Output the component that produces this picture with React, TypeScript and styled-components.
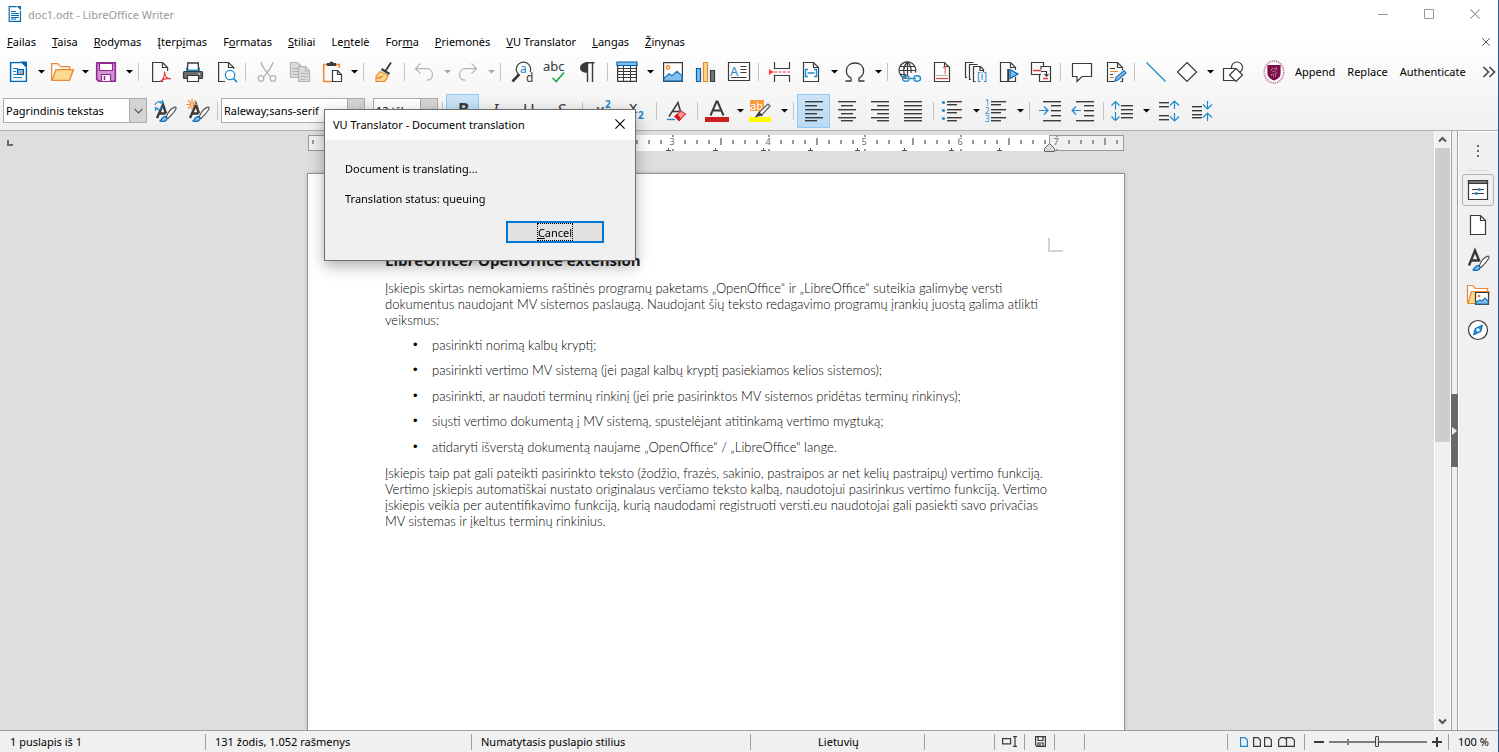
import React from 'react';
import styled, { createGlobalStyle, css } from 'styled-components';

const ink = '#3a3a38';
const blue = '#1e8bcd';
const red = '#ed3d3b';
const orange = '#ed8733';
const grey = '#b4b4b4';

const GlobalStyle = createGlobalStyle`
  * { box-sizing: border-box; }
  body { margin: 0; background: #dededc; }
  body, button, select, input {
    font-family: "Noto Sans", "Open Sans", sans-serif;
    font-size: 11px;
    color: #000;
  }
  button { border: 0; padding: 0; background: none; }
  svg { display: block; flex: none; overflow: visible; }
`;

const Window = styled.div`
  display: flex;
  flex-direction: column;
  height: 100vh;
  overflow: hidden;
  border-right: 1px solid #2b5797;
`;

const Chrome = styled.header`
  display: flex;
  flex-direction: column;
  background: linear-gradient(#fff 30%, #f0f0f0);
  border-bottom: 1px solid #b0b0b0;
`;

const TitleBar = styled.div`
  display: flex;
  align-items: center;
  height: 30px;
  padding: 0 0 2px 8px;
  gap: 6px;
  color: #999;
`;

const TitleText = styled.h1`
  flex: 1;
  margin: 0;
  font-size: 11px;
  font-weight: 400;
`;

const CaptionButtons = styled.div`
  display: flex;
`;

const CaptionButton = styled.button`
  display: flex;
  align-items: center;
  justify-content: center;
  width: 46px;
  height: 28px;
`;

const MenuBar = styled.nav`
  display: flex;
  align-items: center;
  height: 24px;
`;

const MenuItem = styled.button`
  padding: 0 8px;
  line-height: 20px;
  white-space: nowrap;
  &:first-child { padding-left: 7px; }
`;

const Spacer = styled.div`
  flex: 1;
`;

const Toolbar = styled.div<{ $tall?: boolean }>`
  display: flex;
  align-items: center;
  height: ${p => (p.$tall ? 39 : 37)}px;
  padding: ${p => (p.$tall ? '0 0 0 3px' : '0 0 2px 2px')};
`;

const ToolButton = styled.button<{ $active?: boolean; $split?: boolean }>`
  display: flex;
  align-items: center;
  flex: none;
  width: ${p => (p.$split ? 44 : 33)}px;
  height: 34px;
  padding-left: ${p => (p.$split ? 4 : 6)}px;
  gap: 8px;
  ${p => p.$active && css`
    background: linear-gradient(#cce4f7, #bbdaf3);
    box-shadow: inset 0 0 0 1px #90c8f6;
  `}
`;

const TextButton = styled.button`
  padding: 0 6px;
  line-height: 24px;
`;

const OverflowButton = styled.button`
  padding: 0 2px;
`;

const Separator = styled.div`
  flex: none;
  width: 8px;
  height: 18px;
  background: linear-gradient(#c3c3c3, #c3c3c3) center / 1px 100% no-repeat;
`;

const Gap = styled.div`
  flex: none;
  width: 8px;
`;

const Combo = styled.div<{ $width: number; $gap?: number }>`
  display: flex;
  flex: none;
  width: ${p => p.$width}px;
  height: 25px;
  margin-right: ${p => p.$gap || 0}px;
  border: 1px solid #ababb2;
  background: #fff;
`;

const ComboSelect = styled.select`
  flex: 1;
  min-width: 0;
  padding: 0 2px;
  border: 0;
  appearance: none;
  background: none;
`;

const ComboArrow = styled.span`
  display: flex;
  align-items: center;
  justify-content: center;
  width: 18px;
  margin: -1px;
  border: 1px solid #ababab;
  background: #d4d4d4;
`;

const Workspace = styled.main`
  display: flex;
  flex: 1;
  min-height: 0;
`;

const Canvas = styled.section`
  display: flex;
  flex-direction: column;
  flex: 1;
  min-width: 0;
  padding-right: 2px;
  background: #dededc;
`;

const RulerRow = styled.div`
  display: grid;
  grid-template-columns: 1fr auto 1fr;
  height: 42px;
  padding-top: 4px;
`;

const TabStop = styled.span`
  width: 6px;
  height: 6px;
  margin: 5px 0 0 7px;
  border-left: 2px solid #6b6b6b;
  border-bottom: 2px solid #6b6b6b;
`;

const Page = styled.article`
  flex: 1;
  align-self: center;
  width: 818px;
  padding: 64px 61px 0 77px;
  border: 1px solid #949494;
  border-bottom: 0;
  background: #fff;
  box-shadow: 0 0 4px rgba(0, 0, 0, 0.2);
  font-family: Lato, "Open Sans", sans-serif;
  font-size: 13px;
  font-weight: 300;
  line-height: 16px;
  color: #000;
`;

const MarginCorner = styled.div`
  width: 15px;
  height: 14px;
  margin-left: auto;
  border-left: 2px solid #d4d4d4;
  border-bottom: 2px solid #d4d4d4;
`;

const DocHeading = styled.h2`
  margin: -4px 0 8px;
  font-family: "Open Sans", sans-serif;
  font-size: 15px;
  line-height: 24px;
  font-weight: 700;
  color: #1c1c1c;
  white-space: nowrap;
`;

const Paragraph = styled.p`
  margin: 0 0 9px;
  white-space: nowrap;
`;

const BulletList = styled.ul`
  margin: 0;
  padding: 0 0 0 28px;
  list-style: none;
`;

const Bullet = styled.li`
  display: flex;
  margin-bottom: 9px;
  white-space: nowrap;
  &:nth-child(even), &:last-child { margin-bottom: 10px; }
  &::before {
    content: "•";
    width: 19px;
    font-family: "Liberation Sans", sans-serif;
    font-weight: 400;
  }
`;

const ScrollBar = styled.div`
  display: flex;
  flex-direction: column;
  width: 17px;
  background: #f0f0f0;
  border-left: 1px solid #fff;
  border-right: 1px solid #fff;
`;

const ScrollArrow = styled.button`
  display: flex;
  align-items: center;
  justify-content: center;
  height: 17px;
`;

const ScrollTrack = styled.div`
  flex: 1;
`;

const ScrollThumb = styled.div`
  height: 52%;
  background: #cdcdcd;
`;

const Splitter = styled.div`
  display: flex;
  align-items: center;
  width: 7px;
  background: #f0f0f0;
  border-left: 1px solid #a0a0a0;
  border-right: 1px solid #a0a0a0;
`;

const SplitHandle = styled.button`
  display: flex;
  align-items: center;
  justify-content: center;
  flex: none;
  width: 7px;
  height: 73px;
  margin: 0 -1px;
  background: #696969;
`;

const Sidebar = styled.aside`
  display: flex;
  flex-direction: column;
  align-items: center;
  width: 40px;
  padding-right: 2px;
  background: #f0f0f0;
  border-left: 1px solid #fff;
  border-top: 1px solid #fff;
`;

const SideMenu = styled.button`
  display: flex;
  align-items: center;
  justify-content: center;
  width: 22px;
  height: 39px;
  margin-bottom: 3px;
  border-bottom: 1px solid #dcdcdc;
`;

const SideButton = styled.button<{ $active?: boolean }>`
  display: flex;
  align-items: center;
  justify-content: center;
  width: 32px;
  height: 32px;
  margin-bottom: 3px;
  border: 1px solid ${p => (p.$active ? '#b4b4b4' : 'transparent')};
  border-radius: 3px;
`;

const StatusBar = styled.footer`
  display: flex;
  align-items: center;
  height: 22px;
  background: #f0f0f0;
  border-top: 1px solid #a0a0a0;
`;

const StatusCell = styled.div<{ $width?: number; $center?: boolean }>`
  display: flex;
  align-items: center;
  justify-content: ${p => (p.$center ? 'center' : 'flex-start')};
  flex: ${p => (p.$width ? 'none' : '1')};
  width: ${p => (p.$width ? `${p.$width}px` : 'auto')};
  height: 16px;
  padding-left: ${p => (p.$center ? 2 : 9)}px;
  gap: 5px;
  border-right: 1px solid #a0a0a0;
  white-space: nowrap;
  &:first-child { padding-left: 10px; }
  &:last-child { border-right: 0; }
`;

const ZoomSlider = styled.input`
  appearance: none;
  width: 98px;
  height: 14px;
  margin: 0;
  background:
    linear-gradient(#7d7d7d, #7d7d7d) 0 6px / 100% 2px no-repeat,
    linear-gradient(#7d7d7d, #7d7d7d) 18px 4px / 2px 6px no-repeat;
  &::-webkit-slider-thumb {
    appearance: none;
    width: 4px;
    height: 11px;
    border: 1px solid #444;
    border-radius: 1px;
    background: #e0e0e0;
  }
`;

const Dialog = styled.section`
  position: fixed;
  left: 324px;
  top: 109px;
  width: 312px;
  height: 152px;
  border: 1px solid #6f6f6f;
  background: #f0f0f0;
  box-shadow: 0 5px 14px rgba(0, 0, 0, 0.32);
`;

const DialogTitle = styled.header`
  display: flex;
  align-items: center;
  justify-content: space-between;
  height: 30px;
  padding: 0 10px 2px 8px;
  background: #fff;
`;

const DialogBody = styled.div`
  display: flex;
  flex-direction: column;
  gap: 14px;
  padding: 21px 31px 0 20px;
`;

const DialogText = styled.p`
  margin: 0;
  line-height: 16px;
`;

const CancelButton = styled.button`
  align-self: flex-end;
  display: flex;
  justify-content: center;
  width: 98px;
  height: 22px;
  border: 2px solid #0078d7;
  background: #e1e1e1;
`;

const FocusLabel = styled.span`
  height: 18px;
  line-height: 20px;
  outline: 1px dotted #000;
  outline-offset: -1px;
  padding: 0 1px;
`;

/* Shared icon canvas */
const Icon = ({ children, size = 24 }: { children: React.ReactNode; size?: number }) => (
  <svg width={size} height={size} viewBox={`0 0 ${size} ${size}`} fill="none" stroke={ink} strokeWidth="1.2" aria-hidden="true">
    {children}
  </svg>
);

const Arrow = ({ dim }: { dim?: boolean }) => (
  <svg width="7" height="5" viewBox="0 0 7 5" aria-hidden="true"><path d="M0 1h7L3.5 4.6z" fill={dim ? '#a8a8a8' : '#000'} /></svg>
);

const Chevron = ({ up }: { up?: boolean }) => (
  <svg width="9" height="7" viewBox="0 0 9 7" fill="none" stroke="#555" strokeWidth="2" aria-hidden="true">
    <path d={up ? 'M1 5.5 4.5 2 8 5.5' : 'M1 1.5 4.5 5 8 1.5'} />
  </svg>
);

const Rows = ({ list, color = ink }: { list: [number, number, number][]; color?: string }) => (
  <g stroke="none" fill={color}>
    {list.map(([x, y, w]) => <rect key={`${x}-${y}`} x={x} y={y} width={w} height="1.4" />)}
  </g>
);

const Cross = ({ size, color }: { size: number; color: string }) => (
  <svg width={size} height={size} viewBox="0 0 10 10" fill="none" stroke={color} strokeWidth="1.1" aria-hidden="true">
    <path d="M.4.4l9.2 9.2M9.6.4.4 9.6" />
  </svg>
);

const brushTail = (
  <>
    <path d="M13 18.5C15 13 19 9 22 8.2c1.400 0 1.200 1.300.6 2.300-1.600 3-4.600 6-7.600 9z" fill="#fff" stroke="#555" />
    <path d="M6.500 21.800c2.500.3 1.300-3 4.600-4 2.300-.6 3.800 1.200 2.500 3-1.300 1.800-5 2.100-7.100 1z" fill="#83beec" stroke="#0063b1" />
  </>
);

const styleA = <path d="M4 19 10 5.500l3 9M6.500 14.500h6" strokeWidth="2.400" />;

const icons: Record<string, React.ReactNode> = {
  newDoc: <><path d="M15 2.600H4.600v18.800h15.800V8" fill="#fff" stroke="#0063b1" strokeWidth="1.400" /><path d="M14 1.500h7v7z" fill="#0063b1" stroke="none" /><path d="M7 8.500h5M7 11.500h3M7 14.500h4M7 17.500h9" stroke={blue} /><rect x="11.500" y="9.500" width="6" height="5" fill="#83beec" stroke="#0063b1" /><path d="M14 14l3-3v3z" fill={orange} stroke="none" /></>,
  open: <><path d="M1.600 20V3.600h6l3 3h9v3" fill="none" stroke={orange} /><path d="M2 20.400 6 9.600h17.400L19.500 20.400z" fill="#f8db8f" stroke={orange} strokeWidth="1.400" /></>,
  save: <><path d="M2.700 2.700h18.600v18.600H4.700l-2-2z" fill="#d093d6" stroke="#92278f" strokeWidth="1.600" /><path d="M5.500 3.500h13v7h-13z" fill="#fff" stroke="#92278f" /><path d="M7.500 21v-6.500h9V21" fill="#fff" stroke="#92278f" /><path d="M10.500 16v4" stroke="#92278f" strokeWidth="1.600" /></>,
  pdf: <><path d="M15 21.500H4.600v-19h10l5 5V11M14.500 2.500v5h5" /><path d="M12 21.500c3-1 5-5.500 4.500-10 .2 5 3 7.500 6.500 7.500-3-1.300-8 0-11 2.500z" stroke={red} /></>,
  print: <><path d="M6.600 9V3h10.800v6" fill="#fff" /><path d="M5 7.500h14V12H5z" fill={blue} stroke="none" /><path d="M6.500 6.500h11v3h-11z" fill="#fff" stroke="none" /><path d="M6.600 10V3h10.800v7" /><rect x="2.500" y="11.500" width="19" height="7" rx="1" fill="#6d6d6d" /><path d="M17 14h2" stroke="#fff" /><path d="M6.500 15.500h11v6h-11z" fill="#fff" /></>,
  preview: <><path d="M11 21.500H4.600v-19h10l5 5V9M14.500 2.500v5h5" /><circle cx="16" cy="15" r="4.700" fill="#fff" stroke={blue} /><path d="m19.300 18.400 3.700 3.700" stroke={blue} strokeWidth="1.500" /></>,
  cut: <g stroke={grey} strokeWidth="1.300"><path d="M6 2c1 5 4 8 9 14.500M18 2c-1 5-4 8-9 14.500" /><circle cx="6" cy="18.500" r="2.800" /><circle cx="18" cy="18.500" r="2.800" /></g>,
  copy: <g stroke={grey} fill="#dadada"><path d="M2.500 2.500h7l4 4v11h-11z" /><path d="M4.500 8.500h6M4.500 11.500h6M4.500 14.500h6" /><path d="M10.500 6.500h7l4 4v11h-11z" /><path d="M12.500 13.500h7M12.500 16.500h7M12.500 19.500h5M17.500 7v4h4" /></g>,
  paste: <><path d="M13 21.400H4.700V4.500h4M16 4.500h4.300V8" stroke={orange} strokeWidth="1.500" /><path d="M8.500 5.500v-2h2.500c0-2 3-2 3 0h2.500v2z" fill={ink} /><path d="M13.500 10.500h5l4 4v7h-9z" fill="#fff" /><path d="M18.500 10.500v4h4" /></>,
  clone: <><path d="m12.500 11 5.500-8.500" strokeWidth="1.800" /><path d="m8.500 9 8 5" strokeWidth="2.200" /><path d="M7 11.500c-1 2-2.500 3.500-4 4.500v5.500h8.500c1.500-1.500 3-4 3.500-6z" fill="#f8db8f" stroke={orange} /><path d="M3.500 18h5m-5 0 7-2" stroke={orange} /></>,
  undo: <path d="M8.500 3.500 3.500 8.700l5 5M3.500 8.700h11c3.500 0 6 2.500 6 6s-2.500 5.500-6 5.500" stroke={grey} />,
  redo: <path d="m15.500 3.500 5 5.200-5 5M20.500 8.700h-11c-3.500 0-6 2.500-6 6s2.500 5.500 6 5.500" stroke={grey} />,
  find: <><path d="M10 15.600A7.200 7.200 0 1 1 20.200 12" stroke={ink} /><path d="m9 14.500-6.500 7" strokeWidth="2.600" /><text x="10" y="13" fontSize="12" fill={blue} stroke="none">a</text><text x="16" y="22" fontSize="12" fill={ink} stroke="none">d</text></>,
  spell: <><text x="0" y="11" fontSize="13" fill={ink} stroke="none">abc</text><path d="m9.500 18 3.700 3.500L21 12.500" stroke="#18ab50" strokeWidth="1.700" /></>,
  pilcrow: <><path d="M11 2.500c-4 0-7 2-7 5.300 0 3.200 3 5 7 5z" fill={ink} stroke="none" /><path d="M11.500 2v20M16.500 2v20M9 2.700h9.500" strokeWidth="1.400" /></>,
  table: <><path d="M2.600 2.600h18.800v18.800H2.600z" fill="#fff" /><path d="M2 2h20v3.500H2z" fill="#83beec" stroke="#0063b1" /><path d="M2.500 8.500h19M2.500 11.500h19M2.500 14.500h19M2.500 17.500h19M8.500 6v15M15.500 6v15" strokeWidth="1" /></>,
  image: <><path d="M2.600 2.600h18.800v18.800H2.600z" fill="#fff" /><circle cx="7" cy="7.500" r="1.800" fill="#f8db8f" stroke={orange} /><path d="M3 20.800v-2.500l5-4.500 3 2 5-4.500 5 4.500v5z" fill="#83beec" stroke="#1e74bd" /></>,
  chart: <><path d="M2.500 8.500h4v13h-4z" fill="#83beec" stroke="#0063b1" /><path d="M9.500 2.500h4v19h-4z" fill="#f8db8f" stroke={orange} /><path d="M16.500 10.500h4v11h-4z" fill="#797774" /></>,
  textBox: <><path d="M1.500 2.500h21v18h-21z" fill="#fff" /><text x="3" y="16" fontSize="13" fill={blue} stroke="none">A</text><path d="M13.500 6.500h6M13.500 9.500h6M13.500 12.500h6M4 17.500h15.500" strokeWidth="1" /></>,
  pageBreak: <><path d="M6.500 2v6.500h15V2M6.500 22v-6.500h15V22" /><path d="M1 9v6l4.500-3z" fill={red} stroke="none" /><path d="M6 12h16" stroke={red} strokeDasharray="3 1.500" /></>,
  field: <><path d="M4.500 21.500v-19h10l5 5v14zM14.500 2.500v5h5" fill="#fff" /><path d="M9 9.500H6.500v7H9M15 9.500h2.500v7H15M8.500 13h7" stroke={blue} strokeWidth="1.400" /></>,
  omega: <path d="M2.500 21h5.500v-3c-3-1.500-4.600-4-4.600-7C3.400 6 7 3 12 3s8.600 3 8.600 8c0 3-1.600 5.500-4.600 7v3h5.500" strokeWidth="1.300" />,
  link: <><path d="M18.500 12.500A8.400 8.400 0 1 0 9 18.500" /><path d="M10.500 2c-5 5-5 11.500-1 16.500M10.500 2c3 3 4 7 3.500 11M10.500 2v14M3 6.500h15M2 10.500h17M3 14.500h6" /><path d="M12 17.500c0-2.500-6.500-2.500-6.500 1s6.500 3.500 6.500 1M17 17.500c0-2.500 6.500-2.500 6.500 1s-6.500 3.500-6.500 1M10 18.500h9" stroke={blue} strokeWidth="1.400" /></>,
  footnote: <><path d="M4.500 21.500v-19h10l5 5v14zM14.500 2.500v4h5" fill="#fff" /><path d="M6 15.500h12" stroke={grey} /><path d="M6 18.500h12" stroke={red} /><text x="12" y="14" fontSize="10" fill={red} stroke="none">1</text></>,
  endnote: <><path d="M4 17.500H2.500v-15h8M8 19.500H6.500v-15h8" /><path d="M12.500 21.500h-2v-15h7l3 3V12M17 6.500v4h3.500" /><text x="14" y="20" fontSize="11" fill={blue} stroke="none">[i]</text></>,
  bookmark: <><path d="M15 21.500H4.500v-19h10l5 5V10M14.500 2.500v5h5M19.500 17v4.500h-6" /><path d="M12.200 9v13" strokeWidth="2" /><path d="M14 9.500v9l8-4.500z" fill="#83beec" stroke="#0063b1" /></>,
  crossRef: <><path d="M12 14.500H2.500v-12h12V6" /><path d="M4 10.500h8" stroke={red} strokeWidth="1.500" /><path d="M12 9.500v-3h9.500v15h-11V14" /><path d="M12 11.500h5.500V16M15.500 14.200l2 2 2-2" /><path d="M14 18.500h5" stroke={red} strokeWidth="1.500" /></>,
  comment: <path d="M2.500 3.500h19v13H12l-5 5v-5H2.500z" fill="#fff" />,
  track: <><path d="M12 21.500H4.500v-19h10l5 5V10M14.500 2.500v5h5M19.500 18v3.500h-2" /><path d="M7 8.500h5M7 14.500h3" stroke={ink} /><path d="M7 11.500h8M7 17.500h4" stroke={orange} /><path d="m12 21 1-3.500 8-7 2 2.500-8 7z" fill="#83beec" stroke="#1e74bd" /></>,
  line: <path d="m2.500 2.500 19 19" stroke={blue} />,
  diamond: <path d="M12 2.500 21.500 12 12 21.500 2.500 12z" fill="#fff" />,
  shapes: <><circle cx="16" cy="7.500" r="5.500" fill="#fff" /><path d="M2.500 8.500h12v12h-12z" fill="#fff" /><path d="m15 8.500 6.500 6.500-6.500 6.500L8.500 15z" fill="#fff" /></>,
  crest: <><ellipse cx="12" cy="12" rx="9.700" ry="11" fill="#fff" stroke="#c88aa9" strokeWidth="1.800" strokeDasharray="1.500 .8" /><path d="M6 5.500h12v8c0 4-3 5-6 6.500-3-1.500-6-2.500-6-6.500z" fill="#7b0e46" stroke="#7b0e46" /><path d="m9 10 2-2 2 1 1.500-2v3l-2 2-2-1zM9.500 16v-2h2v3M13.500 17v-4h2" stroke="#c27fa0" strokeWidth=".8" /></>,
  styleUpdate: <>{styleA}{brushTail}<path d="M2 6c1-3.500 5.500-4.500 7.500-2V1M9.500 4h-3M10 7.500c-1 3.500-5.500 4-7.500 1.500v3M2.500 9h3" stroke={blue} /></>,
  styleNew: <>{styleA}{brushTail}<path d="M6 0v3M6 8v3M.5 5.500h3M8.500 5.500h3M2 1.500l2 2M10 1.500l-2 2M2 9.500l2-2M4.500 4h3v3h-3z" stroke={orange} /></>,
  bold: <text x="6" y="17" fontSize="17" fontWeight="700" fill={ink} stroke="none">B</text>,
  italic: <text x="8" y="17" fontSize="16" fontStyle="italic" fill={ink} stroke="none">I</text>,
  underline: <text x="5" y="17" fontSize="16" textDecoration="underline" fill={ink} stroke="none">U</text>,
  strike: <text x="7" y="17" fontSize="16" textDecoration="line-through" fill={ink} stroke="none">S</text>,
  superscript: <><text x="4" y="17" fontSize="16" fill={ink} stroke="none">x</text><text x="13" y="9" fontSize="10" fontWeight="700" fill={blue} stroke="none">2</text></>,
  subscript: <><text x="4" y="14" fontSize="16" fill={ink} stroke="none">x</text><text x="13" y="20" fontSize="10" fontWeight="700" fill={blue} stroke="none">2</text></>,
  clear: <><path d="m3 17.500 9-14 2.500 9M6.500 12.500h7" strokeWidth="1.500" /><path d="M1 20.500h8" stroke={blue} strokeWidth="1.400" /><path d="m9 17.500 6-5.500 4.500 3-6.500 6.500z" fill="#f7989c" stroke={red} /><path d="m9 17.500 4 4 1.500-1.500-3.500-4.500z" fill="#c9211e" stroke="#c9211e" /></>,
  fontColor: <><path d="m5.500 16.500 6-14h1l6 14M8 11.500h8" strokeWidth="2" /><path d="M0 18h24v5H0z" fill="#c9211e" stroke="none" /></>,
  highlight: <><path d="M1 1h14v11H1z" fill="#ff9a3c" stroke="none" /><text x="1" y="11" fontSize="11" fill="#fff" stroke="none">ab</text><path d="M0 18h22v5H0z" fill="#ffff00" stroke="none" /><path d="m10 13.500 9-8.500 2 2-8.500 9.500z" fill="#fff" stroke="#555" /><path d="m7 17.500 3-4 2.500 2.500z" fill={ink} stroke={ink} /></>,
  alignLeft: <Rows list={[[2, 2, 18], [2, 6, 12], [2, 10, 18], [2, 14, 12], [2, 18, 18], [2, 21, 12]]} />,
  alignCenter: <Rows list={[[2, 2, 18], [5, 6, 12], [2, 10, 18], [5, 14, 12], [2, 18, 18], [5, 21, 12]]} />,
  alignRight: <Rows list={[[2, 2, 18], [8, 6, 12], [2, 10, 18], [8, 14, 12], [2, 18, 18], [8, 21, 12]]} />,
  justify: <Rows list={[[2, 2, 18], [2, 6, 18], [2, 10, 18], [2, 14, 18], [2, 18, 18], [2, 21, 18]]} />,
  bullets: <><Rows list={[[6, 2, 15], [6, 5, 10], [6, 10, 15], [6, 13, 10], [6, 18, 15], [6, 21, 10]]} /><g fill={blue} stroke="none"><circle cx="2.500" cy="3.500" r="1.600" /><circle cx="2.500" cy="11.500" r="1.600" /><circle cx="2.500" cy="19.500" r="1.600" /></g></>,
  numbers: <><Rows list={[[6, 2, 15], [6, 5, 10], [6, 10, 15], [6, 13, 10], [6, 18, 15], [6, 21, 10]]} /><g fill={blue} stroke="none" fontSize="8"><text x="0" y="7">1</text><text x="0" y="15">2</text><text x="0" y="23">3</text></g></>,
  indent: <><Rows list={[[4, 2, 18], [12, 6, 10], [12, 11, 10], [12, 16, 10], [4, 21, 18]]} /><path d="M0 11.500h9M5 7.500l4 4-4 4" stroke={blue} /></>,
  outdent: <><Rows list={[[4, 2, 18], [12, 6, 10], [12, 11, 10], [12, 16, 10], [4, 21, 18]]} /><path d="M0 11.500h9M4 7.500l-4 4 4 4" stroke={blue} /></>,
  lineSpacing: <><Rows list={[[10, 6, 12], [10, 10, 12], [10, 14, 12], [10, 18, 12]]} /><path d="M4.500 2.500v8M.5 6.500l4-4 4 4M4.500 13v8M.5 17.500l4 4 4-4" stroke={blue} /></>,
  spaceUp: <><Rows list={[[2, 3, 10], [2, 7, 10], [2, 16, 10], [2, 20, 10]]} /><path d="M17.500 2v8M13 6.500 17.500 2 22 6.500M17.500 14v8M13 17.500l4.500 4.500 4.500-4.500" stroke={blue} /></>,
  spaceDown: <><Rows list={[[2, 7, 10], [2, 11, 10], [2, 15, 10], [2, 18, 10]]} /><path d="M17.500 2v8M13 5.500l4.500 4.500L22 5.500M17.500 14v8M13 18.500l4.500-4.500 4.500 4.500" stroke={blue} /></>,
  sideProps: <><path d="M2.500 2.500h19v19h-19z" fill="#fff" /><path d="M2.500 2.500h19v3h-19z" fill="#797774" /><path d="M6 11.500h12M6 15.500h12" /><circle cx="13.500" cy="11.500" r="1.600" fill={blue} stroke="none" /><circle cx="10.500" cy="15.500" r="1.600" fill={blue} stroke="none" /></>,
  sidePage: <path d="M4.500 2.500h10l5 5v14h-15zM14.500 2.500v5h5" fill="#fff" />,
  sideStyle: <><path d="m3 17.500 6-15 4.500 11M5 12.500h7.500" strokeWidth="2.400" />{brushTail}</>,
  sideGallery: <><path d="M1.500 20V2.500h5l3 3h12v3" fill="#fff" stroke={orange} /><path d="M2 20.500 5.500 8.500H23l-1 12z" fill="#f8db8f" stroke={orange} /><path d="M9.500 9.500h13v12h-13z" fill="#fff" /><circle cx="13" cy="13" r="1.500" fill={orange} stroke="none" /><path d="m10 21 0-2 4-2 2 1 3-3 3 3v3z" fill="#83beec" stroke="#1e74bd" /></>,
  sideNav: <><circle cx="12" cy="12" r="9.500" fill="#fff" /><path d="m16.500 7-1.500 6.500-7.500 3.500 1.500-6.500z" fill={blue} stroke="#0063b1" strokeWidth=".8" /><circle cx="12" cy="12" r="1.700" fill="#fff" stroke="none" /></>,
};

type Tool = [string, string, ('split' | 'dim' | 'active')?] | '|';

const standardTools: Tool[] = [
  ['newDoc', 'Naujas', 'split'], ['open', 'Atverti', 'split'], ['save', 'Įrašyti', 'split'], '|',
  ['pdf', 'Eksportuoti PDF'], ['print', 'Spausdinti'], ['preview', 'Spaudinio peržiūra'], '|',
  ['cut', 'Iškirpti'], ['copy', 'Kopijuoti'], ['paste', 'Įdėti', 'split'], '|',
  ['clone', 'Klonuoti formatavimą'], '|',
  ['undo', 'Atšaukti', 'dim'], ['redo', 'Pakartoti', 'dim'], '|',
  ['find', 'Rasti ir pakeisti'], ['spell', 'Rašyba'], ['pilcrow', 'Nespausdinamieji ženklai'], '|',
  ['table', 'Lentelė', 'split'], ['image', 'Paveikslas'], ['chart', 'Diagrama'], ['textBox', 'Teksto laukas'], '|',
  ['pageBreak', 'Puslapio lūžis'], ['field', 'Laukas', 'split'], ['omega', 'Specialusis ženklas', 'split'], '|',
  ['link', 'Saitas'], ['footnote', 'Puslapinė išnaša'], ['endnote', 'Galinė išnaša'], ['bookmark', 'Adresynas'], ['crossRef', 'Kryžminė nuoroda'], '|',
  ['comment', 'Komentaras'], ['track', 'Keitimai'], '|',
  ['line', 'Linija'], ['diamond', 'Figūros', 'split'], ['shapes', 'Piešimo funkcijos'],
];

const formatTools: Tool[] = [
  ['bold', 'Pusjuodis', 'active'], ['italic', 'Kursyvas'], ['underline', 'Pabrauktas'], ['strike', 'Perbrauktas'], '|',
  ['superscript', 'Viršutinis indeksas'], ['subscript', 'Apatinis indeksas'], '|',
  ['clear', 'Valyti formatavimą'], '|',
  ['fontColor', 'Šrifto spalva', 'split'], ['highlight', 'Paryškinimas', 'split'], '|',
  ['alignLeft', 'Lygiuoti kairėje', 'active'], ['alignCenter', 'Centruoti'], ['alignRight', 'Lygiuoti dešinėje'], ['justify', 'Abipusė lygiuotė'], '|',
  ['bullets', 'Ženklinimas', 'split'], ['numbers', 'Numeravimas', 'split'], '|',
  ['indent', 'Didinti įtrauką'], ['outdent', 'Mažinti įtrauką'], '|',
  ['lineSpacing', 'Tarpai tarp eilučių', 'split'], ['spaceUp', 'Didinti tarpus'], ['spaceDown', 'Mažinti tarpus'],
];

const Tools = ({ list }: { list: Tool[] }) => (
  <>
    {list.map((tool, i) => {
      if (tool === '|') return <Separator key={i} />;
      const [name, label, kind] = tool;
      const split = kind === 'split' || kind === 'dim';
      return (
        <ToolButton key={name} aria-label={label} $split={split} $active={kind === 'active'}>
          <Icon>{icons[name]}</Icon>
          {split && <Arrow dim={kind === 'dim'} />}
        </ToolButton>
      );
    })}
  </>
);

const menus: [string, string, string][] = [
  ['', 'F', 'ailas'], ['', 'T', 'aisa'], ['', 'R', 'odymas'], ['Įterp', 'i', 'mas'], ['F', 'o', 'rmatas'], ['', 'S', 'tiliai'],
  ['Le', 'n', 'telė'], ['For', 'm', 'a'], ['', 'P', 'riemonės'], ['', 'V', 'U Translator'], ['', 'L', 'angas'], ['', 'Ž', 'inynas'],
];

const ComboBox = ({ label, value, width, gap }: { label: string; value: string; width: number; gap?: number }) => (
  <Combo $width={width} $gap={gap}>
    <ComboSelect aria-label={label} defaultValue={value}><option>{value}</option></ComboSelect>
    <ComboArrow>
      <svg width="9" height="6" viewBox="0 0 9 6" fill="none" stroke="#555" strokeWidth="1.200" aria-hidden="true"><path d="m.5.8 4 4 4-4" /></svg>
    </ComboArrow>
  </Combo>
);

const INCH = 96;
const ORIGIN = 77;

const Ruler = () => {
  const ticks: React.ReactNode[] = [];
  for (let i = -6; i <= 61; i++) {
    const x = ORIGIN + i * 12;
    if (i % 8 === 0) {
      ticks.push(<path key={i} d={`M${x - 1} 0h2v2h-2zM${x - 1} 14h2v2h-2z`} fill="#999" />);
    } else {
      const long = i % 4 === 0;
      ticks.push(<rect key={i} x={x - 1} y={long ? 3 : 5} width="2" height={long ? 7 : 4} fill="#999" />);
    }
  }
  return (
    <svg width="816" height="17" viewBox="0 0 816 17" aria-hidden="true">
      <rect width="816" height="16" fill="#fff" />
      <rect x=".5" y=".5" width="76" height="15" fill="#f0f0f0" stroke="#999" />
      <rect x="741.500" y=".5" width="74" height="15" fill="#f0f0f0" stroke="#999" />
      {ticks}
      {[1, 2, 3, 4, 5, 6, 7].map(n => (
        <text key={n} x={ORIGIN + n * INCH - 1} y="10" fontSize="9" textAnchor="middle" fill="#6b6b78">{n}</text>
      ))}
      {Array.from({ length: 13 }, (_, i) => {
        const x = Math.round(ORIGIN + (i + 1) * 47.2);
        return <path key={i} d={`M${x - 2} 15.500h5M${x + 0.5} 13v3`} stroke="#555" fill="none" />;
      })}
      <path d="M736.500 16.500v-3l5-5 5 5v3z" fill="#dcdcdc" stroke="#666" />
    </svg>
  );
};

const bullets = [
  'pasirinkti norimą kalbų kryptį;',
  'pasirinkti vertimo MV sistemą (jei pagal kalbų kryptį pasiekiamos kelios sistemos);',
  'pasirinkti, ar naudoti terminų rinkinį (jei prie pasirinktos MV sistemos pridėtas terminų rinkinys);',
  'siųsti vertimo dokumentą į MV sistemą, spustelėjant atitinkamą vertimo mygtuką;',
  'atidaryti išverstą dokumentą naujame „OpenOffice“ / „LibreOffice“ lange.',
];

const sideTools: [string, string][] = [
  ['sideProps', 'Savybės'], ['sidePage', 'Puslapis'], ['sideStyle', 'Stiliai'], ['sideGallery', 'Galerija'], ['sideNav', 'Žvalgiklis'],
];

const miniPage = 'M.6.600h4.400l2.400 2.400v6.400H.6z';

export default function App() {
  return (
    <Window>
      <GlobalStyle />
      <Chrome>
        <TitleBar>
          <svg width="14" height="16" viewBox="0 0 14 16" fill="none" stroke="#0b6cb5" aria-hidden="true">
            <path d="M8.500.7H1.200v14.600h11.300V5" strokeWidth="1.200" fill="#fff" /><path d="M8.500 0H13v4.500z" fill="#0b6cb5" stroke="none" />
            <path d="M3 5.500h5M3 7.500h8M3 9.500h8M3 11.500h8M3 13h5" />
          </svg>
          <TitleText>doc1.odt - LibreOffice Writer</TitleText>
          <CaptionButtons>
            <CaptionButton aria-label="Sumažinti"><svg width="10" height="10"><path d="M0 5.500h10" stroke="#999" /></svg></CaptionButton>
            <CaptionButton aria-label="Išdidinti"><svg width="10" height="10"><path d="M.5.5h9v9h-9z" stroke="#999" fill="none" /></svg></CaptionButton>
            <CaptionButton aria-label="Užverti"><Cross size={10} color="#999" /></CaptionButton>
          </CaptionButtons>
        </TitleBar>
        <MenuBar>
          {menus.map(([before, key, after]) => (
            <MenuItem key={before + key + after}>{before}<u>{key}</u>{after}</MenuItem>
          ))}
          <Spacer />
          <MenuItem aria-label="Užverti dokumentą"><Cross size={8} color="#333" /></MenuItem>
        </MenuBar>
        <Toolbar>
          <Tools list={standardTools} />
          <Gap />
          <ToolButton aria-label="VU Translator"><Icon>{icons.crest}</Icon></ToolButton>
          <TextButton>Append</TextButton>
          <TextButton>Replace</TextButton>
          <TextButton>Authenticate</TextButton>
          <Spacer />
          <OverflowButton aria-label="Daugiau"><svg width="14" height="12" viewBox="0 0 14 12" fill="none" stroke="#444" strokeWidth="1.600" aria-hidden="true"><path d="m1.500 1 5 5-5 5M7.500 1l5 5-5 5" /></svg></OverflowButton>
        </Toolbar>
        <Toolbar $tall>
          <ComboBox label="Pastraipos stilius" value="Pagrindinis tekstas" width={144} />
          <ToolButton aria-label="Atnaujinti stilių"><Icon>{icons.styleUpdate}</Icon></ToolButton>
          <ToolButton aria-label="Naujas stilius"><Icon>{icons.styleNew}</Icon></ToolButton>
          <Separator />
          <ComboBox label="Šriftas" value="Raleway;sans-serif" width={144} gap={8} />
          <ComboBox label="Šrifto dydis" value="12 tšk." width={65} />
          <Separator />
          <Tools list={formatTools} />
        </Toolbar>
      </Chrome>

      <Workspace>
        <Canvas>
          <RulerRow>
            <TabStop />
            <Ruler />
          </RulerRow>
          <Page>
            <MarginCorner />
            <DocHeading>LibreOffice/ OpenOffice extension</DocHeading>
            <Paragraph>
              Įskiepis skirtas nemokamiems raštinės programų paketams „OpenOffice“ ir „LibreOffice“ suteikia galimybę versti<br />
              dokumentus naudojant MV sistemos paslaugą. Naudojant šių teksto redagavimo programų įrankių juostą galima atlikti<br />
              veiksmus:
            </Paragraph>
            <BulletList>
              {bullets.map(text => <Bullet key={text}>{text}</Bullet>)}
            </BulletList>
            <Paragraph>
              Įskiepis taip pat gali pateikti pasirinkto teksto (žodžio, frazės, sakinio, pastraipos ar net kelių pastraipų) vertimo funkciją.<br />
              Vertimo įskiepis automatiškai nustato originalaus verčiamo teksto kalbą, naudotojui pasirinkus vertimo funkciją. Vertimo<br />
              įskiepis veikia per autentifikavimo funkciją, kurią naudodami registruoti versti.eu naudotojai gali pasiekti savo privačias<br />
              MV sistemas ir įkeltus terminų rinkinius.
            </Paragraph>
          </Page>
        </Canvas>
        <ScrollBar>
          <ScrollArrow aria-label="Aukštyn"><Chevron up /></ScrollArrow>
          <ScrollTrack><ScrollThumb /></ScrollTrack>
          <ScrollArrow aria-label="Žemyn"><Chevron /></ScrollArrow>
        </ScrollBar>
        <Splitter>
          <SplitHandle aria-label="Slėpti polangį"><svg width="5" height="8"><path d="M0 0v8l5-4z" fill="#f0f0f0" /></svg></SplitHandle>
        </Splitter>
        <Sidebar>
          <SideMenu aria-label="Polangio nuostatos"><svg width="2" height="12"><path d="M0 0h2v2H0zM0 5h2v2H0zM0 10h2v2H0z" fill="#666" /></svg></SideMenu>
          {sideTools.map(([name, label], i) => (
            <SideButton key={name} aria-label={label} $active={i === 0}><Icon>{icons[name]}</Icon></SideButton>
          ))}
        </Sidebar>
      </Workspace>

      <StatusBar>
        <StatusCell $width={206}>1 puslapis iš 1</StatusCell>
        <StatusCell $width={266}>131 žodis, 1.052 rašmenys</StatusCell>
        <StatusCell $width={279}>Numatytasis puslapio stilius</StatusCell>
        <StatusCell $width={174} $center>Lietuvių</StatusCell>
        <StatusCell $width={70} />
        <StatusCell $width={30} $center>
          <svg width="17" height="11" fill="none" stroke={ink} strokeWidth="1.200" aria-hidden="true"><path d="M.6 2.600h8v5.300h-8zM11 .6h4M11 10.400h4M13 .6v9.800" /></svg>
        </StatusCell>
        <StatusCell $width={30} $center>
          <svg width="11" height="11" fill="none" stroke={ink} strokeWidth="1.200" aria-hidden="true"><path d="M.6.600h9.800v9.800H2.100L.6 9zM3 1v3.500h5V1M3 10V7h5v3M5 8v2" /></svg>
        </StatusCell>
        <StatusCell $width={30} />
        <StatusCell />
        <StatusCell $width={77} $center>
          <svg width="8" height="10" fill="none" stroke={blue} strokeWidth="1.200" aria-hidden="true"><path d={miniPage} /></svg>
          <svg width="20" height="10" fill="none" stroke={ink} strokeWidth="1.200" aria-hidden="true"><path d={miniPage} /><path d={miniPage} transform="translate(11)" /></svg>
          <svg width="17" height="10" fill="none" stroke={ink} strokeWidth="1.200" aria-hidden="true"><path d="M8.500 9.400H.6V3L3 .6h3.500l2 2zM8.500 9.400h7.900V3L14 .6h-5.500z" /></svg>
        </StatusCell>
        <StatusCell $width={144} $center>
          <svg width="10" height="10" aria-hidden="true"><path d="M0 5h10" stroke={ink} strokeWidth="2" /></svg>
          <ZoomSlider type="range" aria-label="Mastelis" min="0" max="100" defaultValue="49" />
          <svg width="10" height="10" aria-hidden="true"><path d="M0 5h10M5 0v10" stroke={ink} strokeWidth="2" /></svg>
        </StatusCell>
        <StatusCell $width={49}>100 %</StatusCell>
      </StatusBar>

      <Dialog role="dialog" aria-labelledby="dialog-title">
        <DialogTitle>
          <span id="dialog-title">VU Translator - Document translation</span>
          <button aria-label="Užverti dialogą"><Cross size={10} color="#000" /></button>
        </DialogTitle>
        <DialogBody>
          <DialogText>Document is translating...</DialogText>
          <DialogText>Translation status: queuing</DialogText>
          <CancelButton><FocusLabel><u>C</u>ancel</FocusLabel></CancelButton>
        </DialogBody>
      </Dialog>
    </Window>
  );
}
